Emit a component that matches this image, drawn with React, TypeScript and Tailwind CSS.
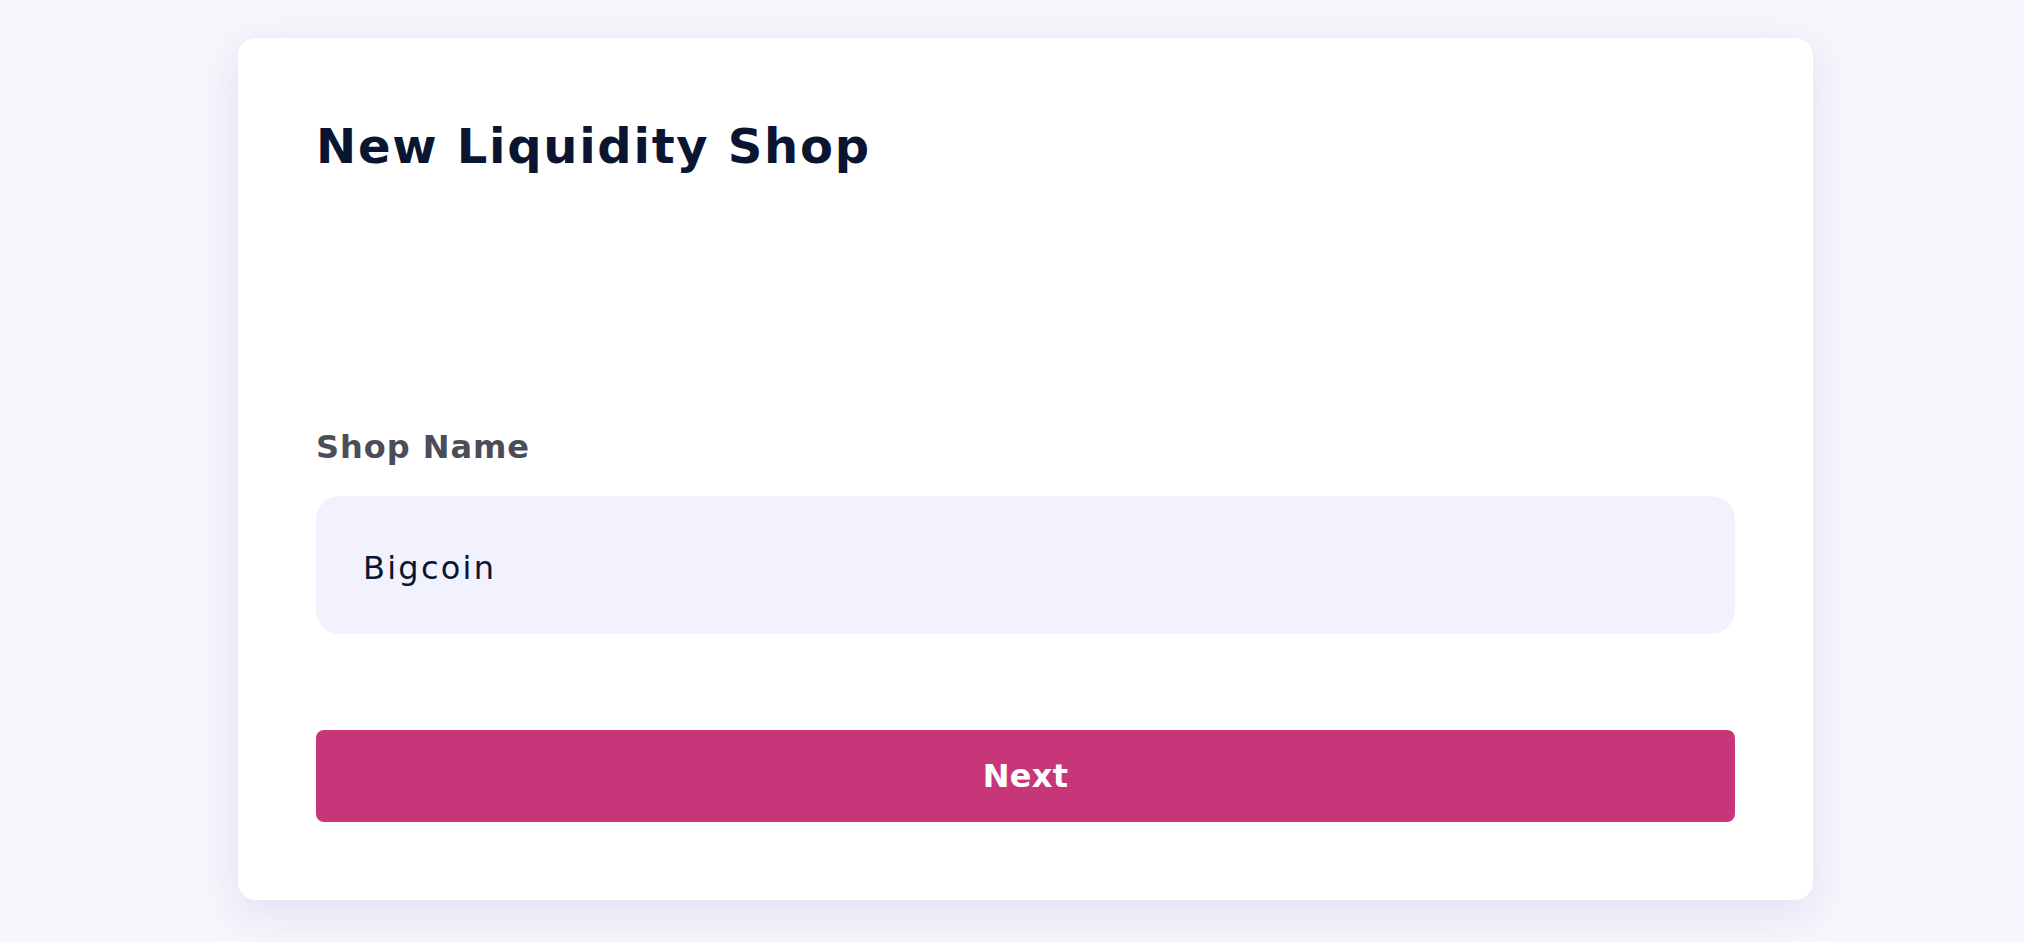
export default function App() {
  return (
    <div
      className="min-h-screen w-full bg-[#f6f6fc] pl-[238px] pr-[211px] pt-[38px] pb-[44px]"
      style={{ fontFamily: '"DejaVu Sans", "Noto Sans", sans-serif' }}
    >
      <div className="flex flex-col rounded-[18px] bg-white px-[78px] pt-[84px] pb-[78px] shadow-[0_12px_40px_rgba(200,196,232,0.45)]">
        {/* Title */}
        <h1 className="text-[48px] font-bold leading-none tracking-[0.036em] text-[#0a1631]">
          New Liquidity Shop
        </h1>

        {/* Shop name field */}
        <label className="mt-[261px] text-[32px] font-bold leading-none tracking-[0.03em] text-[#4b4d57]">
          Shop Name
        </label>
        <div className="mt-[33px] flex h-[138px] items-center rounded-[24px] bg-[#f2f2fe] px-[47px] pt-[5px]">
          <span className="text-[32px] leading-none tracking-[0.07em] text-[#0a1631]">Bigcoin</span>
        </div>

        {/* Submit */}
        <button className="mt-[96px] flex h-[92px] items-center justify-center rounded-[8px] bg-[#c8367a] text-[32px] font-bold leading-none tracking-[0.01em] text-white">
          Next
        </button>
      </div>
    </div>
  );
}
